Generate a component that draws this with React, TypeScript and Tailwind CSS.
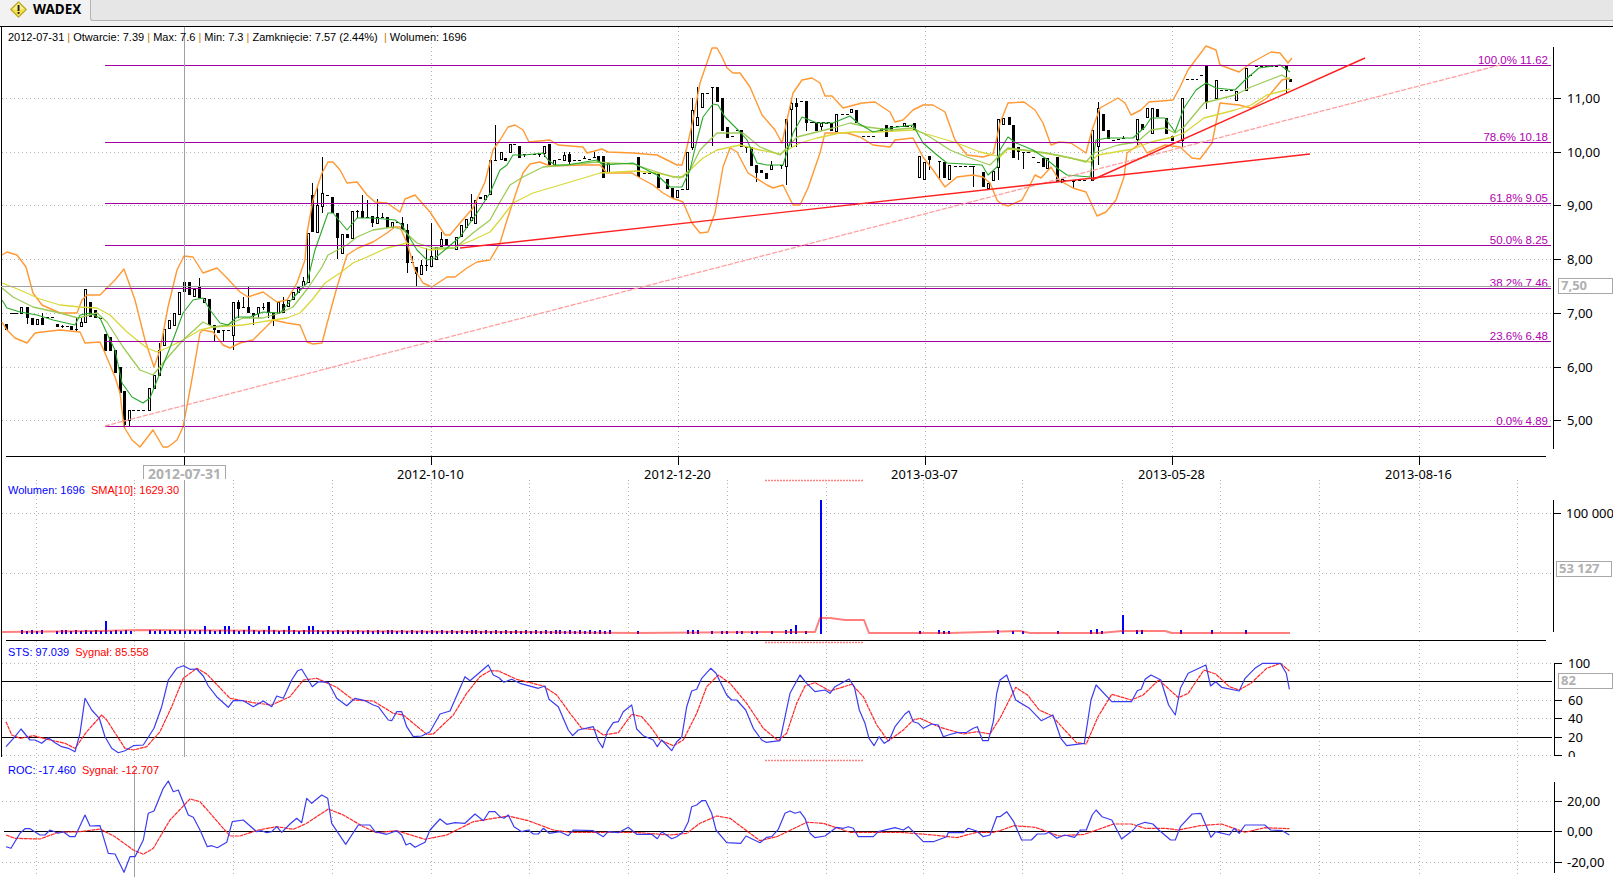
import type { ReactNode } from 'react';

type Pt = [number, number];
// x, body top, body bottom, filled, wick high, wick low
type Candle = [number, number, number, number, number?, number?];

const toPts = (pts: Pt[]) => pts.map((p) => `${p[0]},${p[1]}`).join(' ');
// lower panes were read off 3x crops, so convert them back to page coordinates
const crop = (ox: number, oy: number, sx: number, pts: Pt[]): Pt[] =>
  pts.map((p) => [+(ox + p[0] / sx).toFixed(1), +(oy + p[1] / 3).toFixed(1)]);

const upperBand: Pt[] = [
  [2, 255], [7, 252], [17, 255], [26, 267], [33, 293], [42, 305], [60, 313], [77, 313], [82, 300], [87, 295], [100, 295], [115, 280], [124, 269], [135, 300], [145, 340], [154, 367], [160, 350], [168, 307], [177, 270], [184, 256], [193, 257], [203, 273], [217, 268], [227, 278], [240, 292], [248, 297], [263, 292], [277, 302], [287, 300], [297, 283], [305, 260], [307, 233], [313, 200], [322, 173], [328, 162], [333, 162], [340, 170], [347, 183], [357, 182], [367, 195], [375, 202], [387, 203], [400, 212], [405, 199], [415, 195], [430, 212], [445, 235], [450, 235], [460, 223], [473, 208], [485, 182], [493, 150], [500, 140],
  [508, 127], [515, 125], [523, 130], [529, 142], [550, 140], [558, 145], [583, 147], [587, 153], [602, 149], [608, 152], [633, 153], [657, 155], [677, 165], [682, 165], [687, 147], [693, 120], [700, 83], [712, 48], [717, 48], [722, 57], [727, 68], [733, 73], [740, 73], [750, 87], [762, 115], [775, 130], [782, 143], [787, 120], [793, 93], [802, 80], [812, 78], [820, 83], [825, 96], [832, 96], [843, 108], [862, 103], [875, 102], [890, 112], [895, 122], [903, 120], [913, 110], [923, 105], [933, 105], [945, 112], [955, 140], [967, 155], [983, 157], [993, 154], [997, 137],
  [1000, 123], [1008, 103], [1024, 102], [1035, 110], [1043, 123], [1051, 145], [1059, 142], [1071, 143], [1086, 153], [1092, 130], [1100, 108], [1118, 98], [1125, 103], [1131, 115], [1141, 110], [1149, 102], [1173, 100], [1180, 87], [1188, 70], [1206, 46], [1216, 50], [1220, 65], [1239, 72], [1251, 63], [1271, 52], [1280, 53], [1288, 63], [1292, 58],
];

const lowerBand: Pt[] = [
  [2, 322], [7, 330], [15, 338], [27, 343], [35, 333], [42, 332], [60, 330], [80, 332], [85, 343], [100, 342], [105, 353], [115, 377], [120, 393], [124, 427], [132, 440], [140, 447], [153, 430], [163, 447], [168, 447], [177, 440], [183, 427], [190, 390], [200, 333], [203, 330], [213, 332], [223, 345], [230, 348], [240, 343], [253, 340], [263, 330], [273, 320], [287, 323], [300, 325], [307, 342], [313, 344], [322, 343], [328, 320], [337, 287], [347, 255], [358, 248], [373, 242], [387, 233], [395, 227], [400, 227], [407, 243], [415, 270], [423, 283], [432, 287], [447, 277], [455, 277], [467, 268], [477, 262], [490, 260], [500, 243],
  [507, 220], [517, 190], [523, 173], [530, 164], [540, 162], [550, 166], [583, 165], [600, 165], [607, 173], [632, 173], [640, 178], [653, 185], [663, 193], [672, 198], [683, 202], [692, 223], [700, 233], [708, 232], [715, 213], [723, 167], [730, 148], [737, 152], [748, 173], [767, 185], [773, 188], [783, 185], [793, 205], [800, 205], [808, 188], [820, 153], [825, 133], [847, 133], [860, 137], [873, 145], [890, 147], [895, 140], [913, 138], [923, 157], [933, 170], [945, 187], [957, 177], [973, 175], [983, 177], [990, 183], [997, 200],
  [1000, 203], [1008, 206], [1022, 200], [1029, 187], [1035, 175], [1041, 178], [1051, 167], [1059, 180], [1073, 188], [1086, 192], [1097, 216], [1106, 212], [1116, 200], [1124, 177], [1127, 153], [1141, 143], [1147, 153], [1165, 145], [1180, 147], [1192, 158], [1200, 159], [1212, 143], [1220, 103], [1239, 105], [1251, 108], [1267, 98], [1282, 80], [1290, 78],
];

const emaFast: Pt[] = [
  [2, 300], [7, 308], [20, 312], [37, 315], [53, 320], [75, 325], [80, 315], [90, 313], [100, 318], [110, 340], [115, 350], [122, 383], [132, 397], [143, 403], [150, 398], [160, 373], [173, 340], [183, 313], [193, 300], [203, 298], [210, 310], [220, 323], [228, 325], [237, 317], [250, 317], [263, 312], [280, 313], [293, 298], [307, 283], [315, 250], [328, 213], [333, 213], [347, 230], [357, 218], [373, 218], [395, 220], [402, 225], [417, 250], [427, 260], [435, 258], [447, 248], [460, 237], [477, 213], [490, 193], [500, 170],
  [507, 165], [513, 155], [525, 155], [543, 153], [548, 160], [555, 165], [567, 165], [597, 160], [603, 165], [633, 163], [647, 170], [657, 175], [670, 187], [682, 187], [690, 170], [697, 140], [703, 117], [713, 104], [718, 105], [725, 117], [740, 132], [747, 140], [757, 163], [767, 165], [783, 165], [793, 133], [802, 117], [817, 123], [833, 123], [850, 116], [858, 123], [873, 132], [890, 128], [913, 125], [923, 143], [937, 155], [947, 163], [982, 165], [988, 175], [997, 167],
  [1000, 150], [1008, 137], [1016, 143], [1033, 150], [1045, 158], [1057, 168], [1067, 175], [1090, 177], [1096, 140], [1108, 138], [1133, 138], [1145, 127], [1151, 118], [1165, 118], [1175, 132], [1184, 108], [1196, 90], [1206, 83], [1216, 88], [1235, 90], [1245, 80], [1259, 68], [1280, 65], [1290, 72],
];

const emaMid: Pt[] = [
  [2, 288], [13, 297], [33, 307], [60, 313], [78, 318], [97, 313], [107, 322], [123, 347], [140, 370], [153, 375], [163, 363], [183, 340], [203, 322], [213, 327], [228, 325], [243, 318], [263, 318], [280, 313], [293, 307], [308, 288], [322, 267], [328, 255], [347, 245], [357, 237], [373, 230], [393, 227], [403, 230], [417, 243], [433, 248], [455, 248], [473, 233], [490, 220], [500, 202],
  [510, 185], [523, 177], [543, 167], [567, 165], [597, 162], [610, 163], [633, 164], [657, 172], [673, 177], [683, 177], [690, 170], [700, 150], [717, 133], [743, 133], [760, 147], [780, 155], [797, 137], [817, 132], [833, 128], [850, 123], [867, 127], [890, 130], [913, 128], [930, 137], [950, 150], [967, 157], [990, 165],
  [1000, 155], [1008, 148], [1024, 150], [1047, 153], [1071, 158], [1086, 162], [1094, 153], [1118, 145], [1137, 142], [1151, 130], [1165, 128], [1175, 133], [1184, 127], [1204, 103], [1235, 95], [1251, 87], [1282, 75], [1290, 80],
];

const emaSlow: Pt[] = [
  [2, 283], [20, 290], [40, 299], [60, 305], [80, 307], [97, 308], [110, 315], [127, 332], [147, 348], [157, 352], [167, 348], [183, 340], [200, 330], [213, 327], [243, 325], [273, 320], [287, 318], [300, 313], [312, 300], [325, 283], [340, 273], [353, 263], [367, 257], [387, 248], [407, 243], [430, 250], [453, 248], [473, 240], [490, 232], [500, 220],
  [513, 203], [533, 193], [560, 185], [587, 177], [600, 173], [637, 171], [657, 173], [680, 178], [690, 170], [703, 158], [717, 150], [740, 145], [760, 150], [780, 154], [800, 143], [817, 138], [840, 133], [853, 132], [877, 132], [913, 130], [930, 135], [957, 143], [980, 152], [993, 155],
  [1000, 157], [1008, 149], [1031, 151], [1055, 155], [1090, 162], [1098, 155], [1133, 149], [1151, 142], [1173, 137], [1184, 133], [1204, 118], [1235, 110], [1251, 105], [1267, 95], [1290, 89],
];

const candles: Candle[] = [
  [6, 324, 330, 1], [14, 313, 313, 1], [21, 307, 313, 0], [27, 307, 318, 1, 307, 324], [32, 318, 325, 1], [37, 319, 324, 0], [42, 318, 325, 1, 313], [47, 317, 317, 1], [52, 317, 317, 1], [57, 324, 327, 1], [62, 326, 326, 1, 325, 328], [67, 326, 326, 1], [71, 326, 330, 1], [76, 329, 329, 1, 318, 332], [81, 322, 326, 0, 318], [85, 289, 322, 0], [90, 302, 317, 1], [95, 310, 318, 1], [100, 318, 318, 1],
  [105, 334, 351, 1], [110, 337, 351, 1], [115, 350, 373, 1], [120, 367, 393, 1], [124, 391, 425, 1, 391, 427], [129, 410, 420, 0, 410, 427], [149, 388, 410, 0], [154, 375, 388, 0], [159, 350, 375, 0, 343], [164, 329, 345, 0], [169, 320, 328, 0], [174, 313, 325, 0], [179, 292, 314, 0], [184, 282, 292, 1], [189, 282, 295, 1], [194, 289, 296, 0], [199, 287, 298, 1, 278], [204, 298, 302, 0, 298, 303], [209, 299, 325, 1], [214, 325, 330, 1, 325, 341], [218, 330, 333, 1], [223, 330, 330, 1, 330, 341], [228, 330, 330, 1], [233, 302, 335, 0, 302, 350], [238, 302, 309, 1, 300, 318], [243, 307, 307, 1, 297, 308], [248, 307, 313, 1, 287], [253, 313, 316, 1, 313, 325], [258, 307, 313, 0, 307, 318], [263, 307, 307, 1, 303, 310], [268, 302, 313, 1, 302, 318], [273, 313, 319, 1, 313, 326], [278, 302, 313, 0], [283, 304, 313, 1, 297], [288, 300, 306, 0], [293, 292, 299, 0], [298, 287, 292, 0], [303, 281, 286, 0, 277],
  [308, 233, 282, 0], [312, 195, 232, 1, 183], [317, 205, 232, 0, 187], [322, 193, 206, 0, 157, 213], [327, 195, 195, 1], [332, 197, 213, 1], [337, 213, 238, 1, 213, 259], [342, 234, 253, 0], [347, 234, 238, 1], [352, 211, 238, 0], [357, 211, 211, 1, 210, 218], [362, 211, 218, 1, 195], [367, 217, 217, 1, 200, 217], [372, 216, 223, 1, 216, 227], [377, 217, 223, 0, 199], [382, 217, 217, 1, 213], [387, 217, 228, 1], [392, 222, 227, 0], [397, 222, 222, 1], [402, 223, 230, 1, 217], [407, 230, 263, 1, 224, 273], [412, 262, 262, 1, 256], [416, 267, 274, 1, 267, 286], [421, 265, 274, 0, 260, 275], [426, 265, 265, 1, 248, 271], [431, 256, 266, 0, 223], [436, 247, 259, 0], [441, 239, 246, 0, 232], [446, 239, 246, 1], [451, 248, 248, 1], [456, 237, 249, 0], [461, 225, 236, 0], [466, 219, 227, 0], [471, 217, 220, 0, 194], [475, 200, 223, 0], [480, 197, 199, 1], [485, 195, 199, 0], [490, 160, 194, 0], [495, 160, 160, 1, 125], [501, 152, 159, 0],
  [505, 158, 161, 1], [510, 144, 152, 0], [514, 144, 144, 1], [519, 146, 158, 1], [524, 154, 154, 1, 154, 157], [529, 154, 154, 1], [534, 154, 154, 1], [539, 154, 154, 1, 154, 157], [544, 146, 153, 0, 146, 157], [549, 144, 165, 1], [554, 160, 165, 0], [559, 159, 159, 1], [564, 155, 160, 0, 152], [569, 154, 162, 1, 152, 164], [574, 160, 160, 1], [579, 160, 160, 1], [584, 158, 158, 1, 156], [589, 159, 159, 1], [594, 157, 157, 1, 152], [598, 156, 162, 1], [603, 156, 178, 1], [608, 163, 172, 0], [638, 157, 177, 1],
  [658, 173, 188, 1], [667, 179, 189, 1], [672, 188, 198, 1], [677, 190, 197, 0], [682, 189, 189, 1], [687, 152, 189, 0], [692, 110, 147, 0, 98, 150], [697, 117, 125, 0, 87], [702, 93, 107, 0], [707, 93, 93, 1], [712, 87, 87, 1, 87, 146], [717, 87, 102, 1], [722, 98, 131, 1], [727, 127, 138, 1], [732, 136, 136, 1], [737, 130, 130, 1], [741, 130, 147, 1], [746, 147, 147, 1, 147, 153], [751, 147, 166, 1], [756, 165, 173, 1, 165, 182], [761, 170, 173, 1], [766, 173, 179, 1], [771, 165, 169, 0, 161], [781, 165, 165, 1, 165, 169], [786, 119, 166, 0, 119, 185], [791, 103, 109, 0, 98, 147], [796, 103, 107, 1, 98, 147], [801, 101, 101, 1], [806, 101, 123, 1, 101, 131], [811, 122, 122, 1], [816, 123, 131, 1], [821, 123, 126, 0, 123, 131], [826, 123, 123, 1], [831, 123, 131, 1], [836, 114, 131, 0], [851, 109, 112, 0], [856, 110, 123, 1], [881, 128, 130, 0], [886, 125, 137, 1], [891, 126, 131, 1], [904, 123, 126, 0], [914, 123, 130, 1],
  [919, 156, 177, 0], [924, 162, 179, 0], [929, 156, 160, 1, 156, 170], [939, 161, 161, 1, 161, 180], [944, 162, 178, 1], [949, 165, 179, 0], [973, 166, 166, 1, 166, 187], [983, 172, 187, 1], [988, 183, 188, 0], [993, 171, 180, 0], [998, 119, 167, 0, 119, 180],
  [1003, 118, 124, 0], [1009, 117, 125, 1], [1013, 125, 158, 1], [1018, 147, 152, 1, 147, 160], [1023, 152, 152, 1, 152, 169], [1028, 152, 152, 1], [1033, 157, 157, 1], [1038, 162, 162, 1], [1043, 158, 167, 1], [1047, 158, 168, 0], [1057, 157, 182, 1], [1062, 179, 182, 0], [1073, 181, 181, 1, 181, 188],
  [1092, 130, 180, 0], [1098, 108, 146, 0, 102, 165], [1103, 114, 131, 1], [1108, 130, 139, 1], [1113, 140, 140, 1], [1118, 139, 139, 1], [1123, 138, 138, 1, 136], [1137, 119, 139, 0, 119, 145], [1142, 124, 130, 1], [1147, 108, 117, 0], [1152, 108, 133, 0], [1157, 109, 117, 1], [1166, 118, 134, 1], [1172, 136, 141, 1], [1182, 98, 140, 0, 98, 147],
  [1206, 65, 103, 1, 65, 109], [1216, 80, 98, 0], [1236, 91, 100, 0], [1246, 68, 90, 0], [1286, 66, 70, 1, 66, 93], [1290, 79, 82, 1],
];

// runs of flat days that the chart draws as a dashed black line
const flatRuns: number[][] = [
  [132, 147, 410], [10, 18, 313], [614, 634, 163], [643, 656, 173], [862, 877, 136], [896, 912, 126], [841, 850, 114], [1063, 1088, 180], [954, 972, 166], [1186, 1198, 79], [1200, 1206, 75], [1220, 1235, 90], [1249, 1254, 75], [1255, 1280, 66], [812, 830, 122],
];

const fibLevels = [
  { y: 65, label: '100.0% 11.62' },
  { y: 142, label: '78.6% 10.18' },
  { y: 203, label: '61.8% 9.05' },
  { y: 245, label: '50.0% 8.25' },
  { y: 288, label: '38.2% 7.46' },
  { y: 341, label: '23.6% 6.48' },
  { y: 426, label: '0.0% 4.89' },
];

const priceTicks = [
  { y: 98, label: '11,00' }, { y: 152, label: '10,00' }, { y: 205, label: '9,00' }, { y: 259, label: '8,00' },
  { y: 313, label: '7,00' }, { y: 367, label: '6,00' }, { y: 420, label: '5,00' },
];

const priceVerticals = [431, 678, 925, 1172, 1419];
const dateLabels = ['2012-10-10', '2012-12-20', '2013-03-07', '2013-05-28', '2013-08-16'];
const lowerVerticals = [36, 134, 233, 332, 431, 529, 628, 727, 826, 923, 1022, 1122, 1220, 1319, 1419, 1517];

const stsLine = [
  ...crop(0, 600, 3, [[18, 440], [45, 410], [63, 387], [90, 420], [105, 420], [125, 430], [145, 413], [165, 428], [185, 440], [205, 445], [225, 455], [240, 400], [255, 295], [275, 330], [298, 355], [315, 410], [335, 445], [355, 458], [375, 452], [400, 437], [430, 435], [462, 385], [485, 320], [505, 240], [530, 205], [550, 197], [570, 208], [590, 207], [610, 228], [625, 258], [650, 290], [685, 322], [700, 302], [730, 302], [760, 320], [790, 303], [815, 320], [830, 288], [850, 295], [875, 240], [893, 212], [905, 208], [925, 240], [937, 260], [955, 245], [985, 247], [1010, 295], [1040, 317], [1065, 295], [1095, 302], [1120, 315], [1135, 320], [1165, 360], [1175, 362], [1190, 335], [1205, 335], [1220, 380], [1240, 410], [1265, 408], [1290, 395], [1320, 342], [1350, 333], [1395, 230], [1410, 242], [1465, 195], [1480, 225], [1500, 235]]),
  ...crop(500, 600, 3, [[0, 237], [12, 247], [35, 238], [60, 250], [115, 265], [135, 258], [147, 298], [175, 320], [205, 390], [218, 407], [235, 390], [280, 380], [295, 423], [308, 443], [322, 395], [340, 368], [355, 365], [370, 335], [395, 315], [410, 387], [430, 407], [460, 420], [472, 440], [485, 420], [515, 452], [530, 425], [545, 412], [560, 320], [575, 273], [590, 268], [605, 235], [632, 205], [648, 220], [680, 285], [695, 300], [710, 300], [737, 330], [760, 385], [785, 420], [798, 427], [840, 422], [870, 280], [900, 225], [920, 250], [945, 275], [975, 270], [990, 280], [1005, 260], [1047, 237], [1063, 260], [1078, 330], [1095, 370], [1107, 415], [1122, 437], [1137, 410], [1153, 430], [1168, 420], [1185, 380], [1215, 342], [1227, 333], [1240, 365], [1255, 370], [1270, 385], [1295, 372], [1315, 375], [1330, 410], [1345, 405], [1370, 398], [1400, 397], [1420, 385], [1432, 380], [1448, 422], [1465, 422], [1480, 365], [1490, 280]]),
  ...crop(1000, 600, 2.55, [[0, 240], [17, 225], [40, 300], [75, 325], [105, 362], [135, 345], [155, 415], [170, 437], [215, 430], [232, 300], [245, 255], [285, 305], [335, 305], [350, 272], [360, 268], [370, 238], [385, 225], [410, 240], [430, 315], [447, 345], [460, 265], [480, 220], [525, 195], [537, 258], [550, 245], [565, 262], [610, 273], [625, 235], [650, 205], [670, 190], [715, 190], [730, 220], [738, 268]]),
];

const stsSignal = [
  ...crop(0, 600, 3, [[18, 365], [35, 405], [60, 415], [100, 407], [150, 420], [195, 430], [225, 445], [260, 395], [305, 345], [320, 360], [375, 445], [400, 450], [440, 440], [480, 395], [515, 320], [550, 235], [590, 205], [620, 222], [690, 295], [760, 308], [815, 315], [870, 290], [910, 240], [950, 235], [1010, 262], [1060, 300], [1120, 303], [1180, 340], [1210, 345], [1280, 403], [1300, 402], [1360, 345], [1400, 280], [1440, 230], [1470, 212], [1500, 213]]),
  ...crop(500, 600, 3, [[0, 215], [50, 238], [130, 258], [170, 285], [210, 340], [245, 385], [290, 390], [310, 405], [355, 398], [395, 343], [425, 350], [455, 385], [480, 420], [520, 437], [550, 420], [590, 340], [620, 260], [655, 225], [690, 250], [740, 310], [790, 385], [835, 422], [860, 400], [890, 310], [915, 258], [945, 248], [990, 273], [1055, 253], [1090, 290], [1130, 375], [1165, 423], [1210, 390], [1240, 360], [1260, 355], [1320, 382], [1390, 402], [1430, 395], [1470, 402], [1490, 370]]),
  ...crop(1000, 600, 2.55, [[0, 355], [40, 262], [70, 285], [100, 330], [132, 347], [165, 390], [195, 428], [220, 432], [250, 350], [285, 283], [335, 300], [365, 285], [405, 240], [455, 293], [480, 280], [520, 210], [550, 222], [585, 260], [610, 270], [640, 250], [680, 205], [715, 190], [738, 213]]),
];

const rocLine = [
  ...crop(0, 600, 3, [[18, 740], [33, 745], [60, 700], [75, 686], [90, 686], [120, 705], [135, 705], [150, 690], [175, 700], [190, 695], [210, 710], [225, 710], [255, 645], [270, 678], [300, 677], [325, 760], [345, 762], [372, 817], [390, 770], [405, 770], [430, 720], [445, 640], [462, 633], [490, 565], [505, 543], [520, 575], [535, 570], [565, 645], [580, 652], [600, 690], [622, 740], [635, 737], [652, 743], [680, 727], [697, 665], [730, 660], [770, 695], [785, 692], [800, 698], [815, 695], [830, 680], [845, 697], [870, 672], [890, 655], [905, 668], [920, 595], [935, 610], [965, 585], [983, 595], [995, 670], [1037, 733], [1075, 675], [1110, 675], [1125, 695], [1160, 703], [1190, 692], [1205, 705], [1218, 735], [1230, 730], [1245, 742], [1275, 727], [1290, 690], [1320, 657], [1340, 673], [1365, 668], [1395, 670], [1425, 642], [1450, 662], [1467, 635], [1485, 635], [1500, 650]]),
  ...crop(500, 600, 3, [[12, 655], [25, 645], [42, 680], [65, 695], [85, 690], [100, 702], [115, 702], [130, 685], [148, 700], [180, 695], [205, 707], [220, 690], [280, 692], [310, 710], [325, 695], [355, 698], [385, 682], [410, 703], [455, 703], [472, 716], [485, 695], [515, 716], [530, 710], [550, 695], [565, 665], [575, 620], [590, 615], [605, 602], [617, 602], [635, 640], [648, 690], [680, 728], [722, 730], [738, 708], [780, 728], [800, 712], [815, 710], [835, 688], [855, 640], [870, 633], [885, 640], [900, 635], [915, 655], [930, 700], [945, 713], [975, 708], [1010, 682], [1030, 685], [1045, 680], [1060, 685], [1075, 710], [1120, 710], [1135, 695], [1185, 683], [1210, 690], [1225, 680], [1270, 725], [1300, 725], [1340, 710], [1345, 697], [1390, 698], [1405, 685], [1430, 693], [1450, 710], [1470, 705], [1490, 650]]),
  ...crop(1000, 600, 2.55, [[0, 650], [17, 635], [35, 665], [55, 720], [80, 720], [95, 702], [115, 702], [125, 697], [145, 715], [165, 705], [190, 712], [205, 690], [220, 690], [235, 645], [245, 630], [260, 650], [285, 660], [310, 717], [340, 690], [350, 675], [370, 667], [390, 672], [405, 690], [435, 720], [447, 720], [460, 680], [490, 642], [512, 640], [538, 712], [550, 695], [585, 705], [597, 685], [610, 700], [625, 675], [675, 675], [690, 690], [720, 692], [738, 705]]),
];

const rocSignal = [
  ...crop(0, 600, 3, [[18, 705], [45, 715], [120, 717], [175, 697], [240, 695], [300, 687], [345, 710], [400, 750], [430, 763], [460, 745], [510, 660], [570, 597], [600, 605], [690, 708], [720, 708], [775, 690], [830, 680], [880, 688], [920, 670], [985, 627], [1030, 645], [1090, 680], [1130, 698], [1190, 692], [1275, 718], [1340, 705], [1420, 665], [1500, 652]]),
  ...crop(500, 600, 3, [[25, 648], [85, 662], [160, 690], [210, 697], [400, 697], [510, 705], [560, 700], [600, 670], [650, 648], [690, 655], [780, 722], [830, 710], [920, 667], [970, 670], [1050, 697], [1200, 697], [1300, 705], [1370, 713], [1430, 697], [1480, 697]]),
  ...crop(1000, 600, 2.55, [[0, 692], [35, 677], [90, 682], [150, 708], [215, 703], [290, 672], [335, 672], [370, 685], [420, 685], [455, 690], [510, 677], [565, 672], [625, 697], [675, 683], [738, 686]]),
];

const smaLine: Pt[] = [[2, 632], [100, 631], [140, 630], [300, 631], [520, 632], [635, 633], [780, 632], [815, 632], [820, 618], [830, 618], [845, 620], [864, 620], [869, 633], [950, 633], [1020, 631], [1030, 633], [1100, 633], [1122, 631], [1165, 631], [1172, 633], [1290, 633]];

const volumeBars: [number, number][] = (() => {
  const bars: [number, number][] = [];
  for (let x = 21; x < 610; x += 4.94) {
    if ((x > 43 && x < 54) || (x > 130 && x < 148)) continue;
    const rx = Math.round(x);
    if (rx === 105) continue;
    const tall = rx > 200 && rx < 330 && rx % 4 === 0;
    bars.push([rx, tall ? 8 : 3 + (rx % 2)]);
  }
  const sparse: [number, number][] = [[105, 13], [637, 3], [687, 4], [692, 4], [697, 4], [711, 3], [721, 3], [726, 3], [736, 3], [741, 3], [751, 3], [756, 3], [771, 3], [785, 4], [790, 5], [795, 9], [805, 3], [820, 134], [919, 3], [938, 4], [943, 3], [948, 3], [997, 4], [1012, 3], [1022, 3], [1057, 3], [1090, 4], [1096, 5], [1101, 3], [1122, 19], [1136, 4], [1141, 4], [1180, 4], [1211, 4], [1245, 4]];
  return bars.concat(sparse);
})();

const Line = ({ x1, x2, y, color = 'black' }: { x1: number; x2: number; y: number; color?: string }) => (
  <line x1={x1} x2={x2} y1={y + 0.5} y2={y + 0.5} stroke={color} shapeRendering="crispEdges" />
);

const VLine = ({ x, y1, y2, color = 'black' }: { x: number; y1: number; y2: number; color?: string }) => (
  <line x1={x + 0.5} x2={x + 0.5} y1={y1} y2={y2} stroke={color} shapeRendering="crispEdges" />
);

const Dotted = ({ x1, y1, x2, y2 }: { x1: number; y1: number; x2: number; y2: number }) => (
  <line x1={x1} y1={y1} x2={x2} y2={y2} stroke="#b4b4b4" strokeDasharray="1 3" shapeRendering="crispEdges" />
);

const Curve = ({ pts, color, width = 1.3, opacity = 1, dash }: { pts: Pt[]; color: string; width?: number; opacity?: number; dash?: string }) => (
  <polyline points={toPts(pts)} fill="none" stroke={color} strokeWidth={width} strokeOpacity={opacity} strokeDasharray={dash} strokeLinejoin="round" />
);

const AxisLabel = ({ x, y, children }: { x: number; y: number; children: ReactNode }) => (
  <text x={x} y={y} fontSize={13} fill="#000">
    {children}
  </text>
);

const ValueBox = ({ x, y, w, h, label }: { x: number; y: number; w: number; h: number; label: string }) => (
  <g>
    <rect x={x + 0.5} y={y + 0.5} width={w} height={h} fill="white" stroke="#a8a8a8" shapeRendering="crispEdges" />
    <text x={x + 3} y={y + h - 3} fontSize={13} fontWeight="bold" fill="#b0b0b0">
      {label}
    </text>
  </g>
);

function CandleMark({ c }: { c: Candle }) {
  const [x, top, bot, filled, hi, lo] = c;
  const h = Math.max(bot - top, 1);
  return (
    <g shapeRendering="crispEdges">
      {hi !== undefined || lo !== undefined ? <VLine x={x} y1={hi ?? top} y2={lo ?? bot} /> : null}
      {filled ? (
        <rect x={x - 1} y={top} width={3} height={h} fill="black" />
      ) : (
        <rect x={x - 0.5} y={top + 0.5} width={2} height={h} fill="white" stroke="black" />
      )}
    </g>
  );
}

function WarningIcon() {
  return (
    <svg width="17" height="17" viewBox="0 0 17 17" className="shrink-0">
      <path d="M8.5 0.8 16.2 8.5 8.5 16.2 0.8 8.5Z" fill="#f4e04a" stroke="#b9a52a" strokeLinejoin="round" strokeWidth="1.2" />
      <path d="M8.5 2.2 14.6 8.3 8.5 8.5 2.4 8.3Z" fill="#fbf08a" />
      <rect x="7.6" y="4" width="1.9" height="6" fill="#222" />
      <rect x="7.6" y="11" width="1.9" height="1.9" fill="#222" />
    </svg>
  );
}

const legendFont = "[font-family:'Liberation_Sans',sans-serif]";

function PricePane() {
  return (
    <div className="relative h-[457px] overflow-hidden border-t border-black">
      <svg className="block h-full w-full" viewBox="0 27 1613 456">
        {priceTicks.map((t) => (
          <Dotted key={t.y} x1={2} x2={1553} y1={t.y + 0.5} y2={t.y + 0.5} />
        ))}
        {priceVerticals.map((x) => (
          <Dotted key={x} x1={x + 0.5} x2={x + 0.5} y1={27} y2={456} />
        ))}
        {lowerVerticals.map((x) => (
          <Dotted key={x} x1={x + 0.5} x2={x + 0.5} y1={480} y2={483} />
        ))}
        <VLine x={1} y1={27} y2={483} />
        {candles.map((c, i) => (
          <CandleMark key={i} c={c} />
        ))}
        {flatRuns.map(([a, b, y]) => (
          <line key={`${a}-${y}`} x1={a} x2={b} y1={y + 0.5} y2={y + 0.5} stroke="black" strokeDasharray="3 2" shapeRendering="crispEdges" />
        ))}
        <Curve pts={upperBand} color="#ff9933" width={1.4} />
        <Curve pts={lowerBand} color="#ff9933" width={1.4} />
        <Curve pts={emaSlow} color="#d8d83a" />
        <Curve pts={emaMid} color="#9ccb55" />
        <Curve pts={emaFast} color="#2aa82a" width={1.1} />
        {fibLevels.map((f) => (
          <text key={f.y} x={1548} y={f.y - 1} fontSize={11.5} fill="#b000b0" textAnchor="end" className={legendFont}>
            {f.label}
          </text>
        ))}
        <Line x1={1} x2={1551} y={286} color="#a0a0a0" />
        {fibLevels.map((f) => (
          <Line key={f.y} x1={105} x2={1551} y={f.y} color="#a000a0" />
        ))}
        <line x1={105} y1={426} x2={1500} y2={65} stroke="#ffa0a0" strokeWidth={1.3} strokeDasharray="5 1.5" />
        <line x1={460} y1={248} x2={1310} y2={154} stroke="#ff2020" strokeWidth={1.4} />
        <line x1={1092} y1={180} x2={1365} y2={58} stroke="#ff2020" strokeWidth={1.4} />
        <VLine x={184} y1={27} y2={453} color="#a0a0a0" />
        <VLine x={184} y1={480} y2={483} color="#a0a0a0" />

        <VLine x={1553} y1={47} y2={449} />
        {priceTicks.map((t) => (
          <g key={t.y}>
            <Line x1={1553} x2={1561} y={t.y} />
            <AxisLabel x={1567} y={t.y + 5}>
              {t.label}
            </AxisLabel>
          </g>
        ))}
        <ValueBox x={1558} y={278} w={54} h={15} label="7,50" />

        <Line x1={6} x2={1546} y={456} />
        <VLine x={184} y1={456} y2={465} />
        {priceVerticals.map((x, i) => (
          <g key={x}>
            <VLine x={x} y1={456} y2={465} />
            <text x={x - 0.5} y={479} fontSize={12.8} textAnchor="middle" fill="#000">
              {dateLabels[i]}
            </text>
          </g>
        ))}
        <path d="M143.5 479V465.5H225.5V479" fill="white" stroke="#a8a8a8" shapeRendering="crispEdges" />
        <text x={184.5} y={479} fontSize={14} fontWeight="bold" textAnchor="middle" fill="#b0b0b0">
          2012-07-31
        </text>
        <line x1={765} x2={864} y1={480.5} y2={480.5} stroke="#ff8080" strokeWidth={1.5} strokeDasharray="2 1" />
      </svg>
      <div className={`absolute left-2 top-[4px] whitespace-pre text-[11px] leading-[13px] text-black ${legendFont}`}>
        2012-07-31 <span className="text-[#cc7a00]">|</span> Otwarcie: 7.39 <span className="text-[#cc7a00]">|</span> Max: 7.6 <span className="text-[#cc7a00]">|</span> Min: 7.3 <span className="text-[#cc7a00]">|</span> Zamknięcie: 7.57 (2.44%)  <span className="text-[#cc7a00]">|</span> Wolumen: 1696
      </div>
    </div>
  );
}

function VolumePane() {
  return (
    <div className="relative h-[158px] overflow-hidden bg-white">
      <svg className="block h-full w-full" viewBox="0 483 1613 158">
        <VLine x={1} y1={483} y2={641} />
        <Dotted x1={2} x2={1553} y1={513.5} y2={513.5} />
        <Dotted x1={2} x2={1553} y1={573.5} y2={573.5} />
        {lowerVerticals.map((x) => (
          <Dotted key={x} x1={x + 0.5} x2={x + 0.5} y1={483} y2={634} />
        ))}
        <VLine x={184} y1={483} y2={638} color="#a0a0a0" />
        {volumeBars.map(([x, h]) => (
          <rect key={x} x={x} y={634 - h} width={2} height={h} fill="#0000ff" shapeRendering="crispEdges" />
        ))}
        <Curve pts={smaLine} color="#ff0000" width={2} opacity={0.5} />
        <VLine x={1553} y1={500} y2={632} />
        <Line x1={1553} x2={1561} y={513} />
        <AxisLabel x={1566} y={518}>
          100 000
        </AxisLabel>
        <ValueBox x={1556} y={561} w={55} h={15} label="53 127" />
        <Line x1={6} x2={1546} y={640} />
      </svg>
      <div className={`absolute left-2 top-[1px] whitespace-pre text-[11px] leading-[13px] text-[#0000ff] ${legendFont}`}>
        Wolumen: 1696  <span className="text-[#ff0000]">SMA[10]: 1629.30</span>
      </div>
    </div>
  );
}

function StsPane() {
  return (
    <div className="relative h-[116px] overflow-hidden bg-white">
      <svg className="block h-full w-full" viewBox="0 641 1613 116">
        <VLine x={1} y1={641} y2={757} />
        {[663, 700, 718, 755].map((y) => (
          <Dotted key={y} x1={2} x2={1553} y1={y + 0.5} y2={y + 0.5} />
        ))}
        {lowerVerticals.map((x) => (
          <Dotted key={x} x1={x + 0.5} x2={x + 0.5} y1={641} y2={757} />
        ))}
        <VLine x={184} y1={642} y2={757} color="#a0a0a0" />
        <line x1={765} x2={864} y1={642.5} y2={642.5} stroke="#ff8080" strokeWidth={1.5} strokeDasharray="2 1" />
        <Line x1={2} x2={1552} y={681} />
        <Line x1={2} x2={1552} y={737} />
        <Curve pts={stsSignal} color="#ff2828" width={1.2} dash="4 0.6" />
        <Curve pts={stsLine} color="#3c3cf0" width={1.2} />
        <VLine x={1554} y1={663} y2={755} />
        {[
          [663, '100'],
          [700, '60'],
          [718, '40'],
          [737, '20'],
          [755, '0'],
        ].map(([y, label]) => (
          <g key={label}>
            <Line x1={1554} x2={1562} y={y as number} />
            <AxisLabel x={1568} y={(y as number) + 5}>
              {label}
            </AxisLabel>
          </g>
        ))}
        <ValueBox x={1558} y={673} w={54} h={15} label="82" />
      </svg>
      <div className={`absolute left-2 top-[5px] whitespace-pre text-[11px] leading-[13px] text-[#0000ff] ${legendFont}`}>
        STS: 97.039  <span className="text-[#ff0000]">Sygnał: 85.558</span>
      </div>
    </div>
  );
}

function RocPane() {
  return (
    <div className="relative flex-1 overflow-hidden bg-white">
      <svg className="block h-full w-full" viewBox="0 757 1613 122">
        {[801, 862].map((y) => (
          <Dotted key={y} x1={2} x2={1553} y1={y + 0.5} y2={y + 0.5} />
        ))}
        {lowerVerticals.map((x) => (
          <Dotted key={x} x1={x + 0.5} x2={x + 0.5} y1={757} y2={877} />
        ))}
        <VLine x={134} y1={770} y2={877} color="#a0a0a0" />
        <line x1={765} x2={864} y1={760.5} y2={760.5} stroke="#ff8080" strokeWidth={1.5} strokeDasharray="2 1" />
        <Line x1={4} x2={1552} y={831} />
        <Curve pts={rocSignal} color="#ff2828" width={1.2} dash="4 0.6" />
        <Curve pts={rocLine} color="#3c3cf0" width={1.2} />
        <VLine x={1554} y1={782} y2={873} />
        {[
          [801, '20,00'],
          [831, '0,00'],
          [862, '-20,00'],
        ].map(([y, label]) => (
          <g key={label}>
            <Line x1={1554} x2={1562} y={y as number} />
            <AxisLabel x={1567} y={(y as number) + 5}>
              {label}
            </AxisLabel>
          </g>
        ))}
      </svg>
      <div className={`absolute left-2 top-[7px] whitespace-pre text-[11px] leading-[13px] text-[#0000ff] ${legendFont}`}>
        ROC: -17.460  <span className="text-[#ff0000]">Sygnał: -12.707</span>
      </div>
    </div>
  );
}

export default function App() {
  return (
    <div className="flex h-screen w-full flex-col overflow-hidden bg-white [font-family:'Noto_Sans','Liberation_Sans',sans-serif]">
      <div className="flex h-[26px] shrink-0 bg-[#f2f2f2]">
        <div className="flex w-[90px] items-start gap-[6px] pl-[10px] pt-[1px]">
          <WarningIcon />
          <span className="text-[13.5px] font-bold leading-[17px] text-black">WADEX</span>
        </div>
        <div className="h-[21px] flex-1 rounded-bl-[3px] border-b border-l border-[#b4b4b4] bg-[#e6e6e6]" />
      </div>
      <PricePane />
      <VolumePane />
      <StsPane />
      <RocPane />
    </div>
  );
}
